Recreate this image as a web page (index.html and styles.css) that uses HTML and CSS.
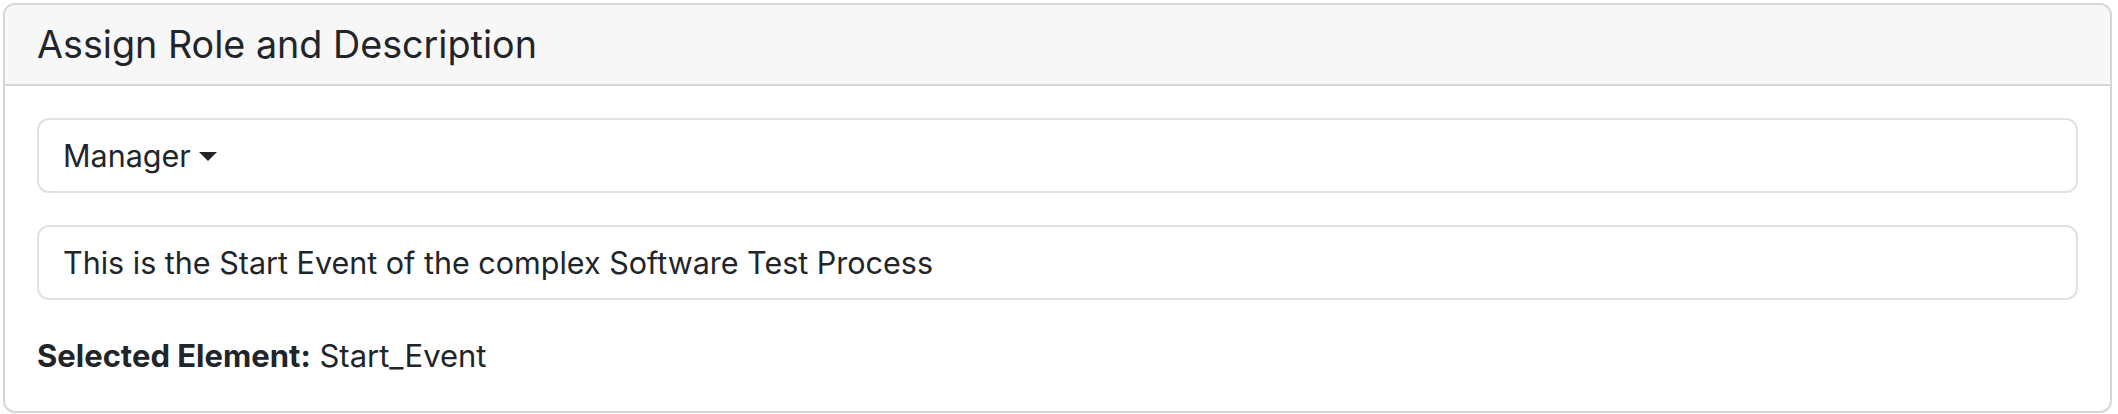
FILE: index.html
```html
<!DOCTYPE html>
<html>
<head>
<meta charset="utf-8">
<link rel="stylesheet" href="styles.css">
</head>
<body>
<div class="card">
  <div class="card-header">Assign Role and Description</div>
  <div class="card-body">
    <div class="field dropdown"><span class="toggle">Manager</span></div>
    <div class="field">This is the Start Event of the complex Software Test Process</div>
    <p class="selected"><strong>Selected Element:</strong> Start_Event</p>
  </div>
</div>
</body>
</html>
```
FILE: styles.css
```css
* { box-sizing: border-box; }
html, body { margin: 0; padding: 0; background: #fff; }
body {
  font-family: Inter, "Noto Sans", sans-serif;
  color: #212529;
  padding: 3px 6px 0 3px;
}
.card {
  border: 2px solid #d6d6d6;
  border-radius: 12px;
  overflow: hidden;
  background: #fff;
}
.card-header {
  background: #f7f7f7;
  border-bottom: 2px solid #d6d6d6;
  padding: 16px 32px;
  font-size: 37.7px;
  line-height: 47px;
  font-weight: 400;
}
.card-body {
  padding: 32px 32px 31px;
}
.field {
  border: 2px solid #dee2e6;
  border-radius: 12px;
  padding: 12px 24px;
  font-size: 30.5px;
  line-height: 48px;
  margin-bottom: 32px;
  height: 75px;
}
.toggle::after {
  content: "";
  display: inline-block;
  margin-left: 8px;
  vertical-align: 6px;
  border-top: 9px solid #212529;
  border-left: 9px solid transparent;
  border-right: 9px solid transparent;
}
.selected {
  margin: 0;
  font-size: 31px;
  line-height: 48px;
}
.selected strong { font-weight: 700; }
```
